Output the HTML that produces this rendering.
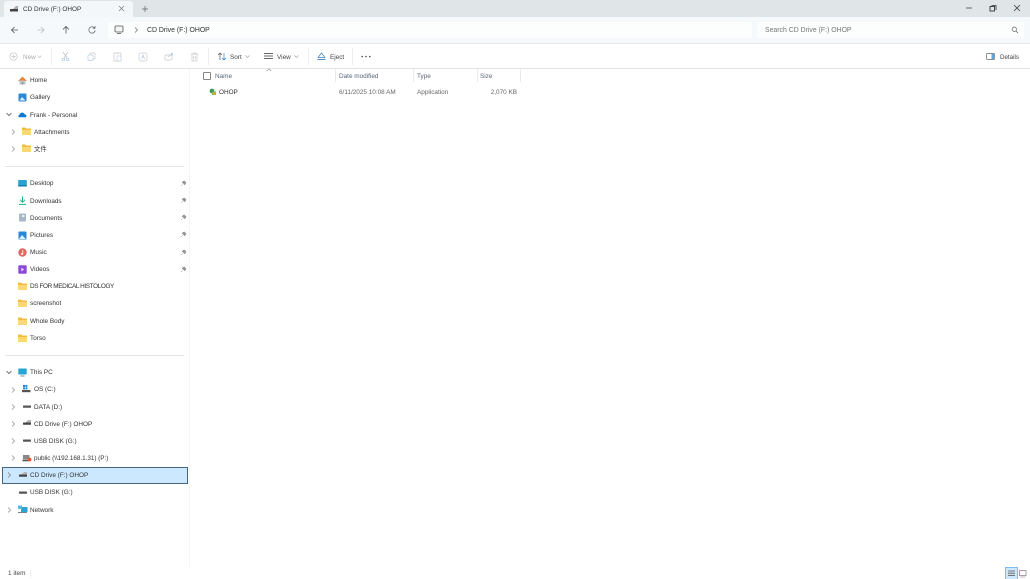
<!DOCTYPE html>
<html><head><meta charset="utf-8"><style>
html,body{margin:0;padding:0;width:1030px;height:579px;overflow:hidden;background:#fff}
body{position:relative;font-family:"Liberation Sans","Noto Sans CJK SC",sans-serif;font-size:6.4px;color:#333;filter:blur(.25px)}
.a{position:absolute}
.t{position:absolute;white-space:nowrap;line-height:10px;height:10px;margin-top:1px}
svg{position:absolute;overflow:visible}
.g{color:#666}
.h{color:#5a6478}
</style></head><body>
<div class="a" style="left:0;top:0;width:1030px;height:17px;background:#e0e5e8"></div>
<div class="a" style="left:4px;top:1px;width:129px;height:16px;background:#f3f7f9;border-radius:3px 3px 0 0"></div>
<div class="a" style="left:0;top:17px;width:1030px;height:26px;background:#f6f9fb;border-bottom:1px solid #e6e8ea"></div>
<div class="a" style="left:108px;top:22px;width:644px;height:16px;background:#fcfdfd;border-radius:2px"></div>
<div class="a" style="left:757px;top:22px;width:267px;height:16px;background:#fcfdfd;border-radius:2px"></div>
<div class="a" style="left:0;top:68px;width:1030px;height:1px;background:#e3e3e3"></div>
<div class="a" style="left:189px;top:69px;width:1px;height:498px;background:#f5f5f5"></div>

<!-- tab -->
<svg style="left:10px;top:5px" width="9" height="8"><rect x="0" y="4" width="8" height="2.5" fill="#444"/><path d="M3 4L6 1H8V4Z" fill="#aaa"/></svg>
<div class="t" style="left:23px;top:4px">CD Drive (F:) OHOP</div>
<svg style="left:118px;top:5px" width="8" height="8"><path d="M1 1L6 6M6 1L1 6" stroke="#777" stroke-width=".7"/></svg>
<svg style="left:141px;top:5px" width="8" height="8"><path d="M4 1V7M1 4H7" stroke="#666" stroke-width=".7"/></svg>
<!-- window -->
<svg style="left:965px;top:5px" width="8" height="6"><path d="M1 3H7" stroke="#444" stroke-width=".8"/></svg>
<svg style="left:989px;top:4px" width="8" height="8"><rect x="1" y="2.5" width="4.5" height="4.5" fill="none" stroke="#333" stroke-width=".9"/><path d="M2.5 1.5H7V6" fill="none" stroke="#333" stroke-width=".8"/></svg>
<svg style="left:1013px;top:4px" width="8" height="8"><path d="M1 1L7 7M7 1L1 7" stroke="#444" stroke-width=".8"/></svg>
<!-- nav -->
<svg style="left:10px;top:25px" width="10" height="10"><path d="M8 5H1.5M4.5 2L1.5 5L4.5 8" fill="none" stroke="#555" stroke-width=".8"/></svg>
<svg style="left:36px;top:25px" width="10" height="10"><path d="M1.5 5H8M5 2L8 5L5 8" fill="none" stroke="#bbb" stroke-width=".8"/></svg>
<svg style="left:61px;top:25px" width="10" height="10"><path d="M5 8.5V1.5M2 4.5L5 1.5L8 4.5" fill="none" stroke="#555" stroke-width=".8"/></svg>
<svg style="left:87px;top:25px" width="10" height="10"><path d="M7.6 3A3.2 3.2 0 1 0 8.2 5.5M8 1V3.2H5.8" fill="none" stroke="#666" stroke-width=".8"/></svg>
<svg style="left:114px;top:25px" width="11" height="10"><rect x="1" y="1" width="8" height="6" rx="1" fill="#f4f4f4" stroke="#555" stroke-width=".8"/><path d="M3 8.5H7" stroke="#555" stroke-width=".8"/></svg>
<svg style="left:134px;top:27px" width="5" height="6"><path d="M1 .5L3.5 3L1 5.5" fill="none" stroke="#666" stroke-width=".7"/></svg>
<div class="t" style="left:147px;top:25px;font-size:6.9px">CD Drive (F:) OHOP</div>
<div class="t g" style="left:765px;top:25px;font-size:6.9px;color:#777">Search CD Drive (F:) OHOP</div>
<svg style="left:1011px;top:26px" width="8" height="8"><circle cx="3.3" cy="3.3" r="2.2" fill="none" stroke="#666" stroke-width=".7"/><path d="M5 5L7 7" stroke="#666" stroke-width=".8"/></svg>

<!-- toolbar -->
<svg style="left:9px;top:52px" width="9" height="9"><circle cx="4.5" cy="4.5" r="3.7" fill="none" stroke="#c4c4c4" stroke-width=".7"/><path d="M4.5 2.5V6.5M2.5 4.5H6.5" stroke="#c4c4c4" stroke-width=".7"/></svg>
<div class="t" style="left:23px;top:52px;color:#aaa">New</div>
<svg style="left:37px;top:55px" width="5" height="4"><path d="M.5 .5L2.5 2.5L4.5 .5" fill="none" stroke="#bbb" stroke-width=".6"/></svg>
<div class="a" style="left:51px;top:48px;width:1px;height:17px;background:#eee"></div>
<svg style="left:61px;top:51px" width="9" height="11"><path d="M2 1L6 7M7 1L3 7" stroke="#c0c0c0" stroke-width=".7"/><circle cx="2.4" cy="8.5" r="1.3" fill="none" stroke="#a9c9e6" stroke-width=".7"/><circle cx="6.6" cy="8.5" r="1.3" fill="none" stroke="#a9c9e6" stroke-width=".7"/></svg>
<svg style="left:87px;top:52px" width="9" height="9"><rect x="3" y="1" width="5" height="6" rx="1" fill="none" stroke="#c8c8c8" stroke-width=".7"/><rect x="1" y="3" width="5" height="5.5" rx="1" fill="#fff" stroke="#b7d0e8" stroke-width=".7"/></svg>
<svg style="left:113px;top:51px" width="9" height="11"><rect x="1" y="2" width="7" height="8" rx="1" fill="none" stroke="#c8c8c8" stroke-width=".7"/><rect x="3" y="1" width="3" height="2" fill="#e4e4e4"/><rect x="4" y="5" width="4" height="5" fill="#fff" stroke="#b7d0e8" stroke-width=".6"/></svg>
<svg style="left:138px;top:51px" width="10" height="11"><rect x="1" y="2" width="8" height="8" rx="2" fill="none" stroke="#c8c8c8" stroke-width=".7"/><path d="M3.5 8L5 4L6.5 8" fill="none" stroke="#a9c9e6" stroke-width=".7"/></svg>
<svg style="left:164px;top:52px" width="10" height="9"><rect x="1" y="3" width="7" height="5" rx="1" fill="none" stroke="#c8c8c8" stroke-width=".7"/><path d="M4 5L8 2M6.5 1.5H8.5V3.5" fill="none" stroke="#a9c9e6" stroke-width=".7"/></svg>
<svg style="left:190px;top:52px" width="9" height="10"><path d="M1 2H8M2 2V9H7V2M3.5 2V1H5.5V2M3.7 4V7.5M5.3 4V7.5" fill="none" stroke="#c8c8c8" stroke-width=".7"/></svg>
<div class="a" style="left:208px;top:48px;width:1px;height:17px;background:#eee"></div>
<svg style="left:217px;top:52px" width="10" height="9"><path d="M3 8V1M1 3L3 1L5 3" fill="none" stroke="#555" stroke-width=".7"/><path d="M7 1V8M5 6L7 8L9 6" fill="none" stroke="#2f7fc9" stroke-width=".7"/></svg>
<div class="t" style="left:230px;top:52px;color:#444">Sort</div>
<svg style="left:245px;top:55px" width="5" height="4"><path d="M.5 .5L2.5 2.5L4.5 .5" fill="none" stroke="#999" stroke-width=".6"/></svg>
<svg style="left:264px;top:52px" width="10" height="8"><path d="M0 1.5H9M0 4H9M0 6.5H9" stroke="#666" stroke-width=".9"/></svg>
<div class="t" style="left:277px;top:52px;color:#444">View</div>
<svg style="left:294px;top:55px" width="5" height="4"><path d="M.5 .5L2.5 2.5L4.5 .5" fill="none" stroke="#999" stroke-width=".6"/></svg>
<div class="a" style="left:308px;top:48px;width:1px;height:17px;background:#eee"></div>
<svg style="left:317px;top:52px" width="9" height="9"><path d="M4.5 1L8 5.5H1Z" fill="none" stroke="#3d7fb8" stroke-width=".7"/><path d="M.5 7.5H8.5" stroke="#3d7fb8" stroke-width=".9"/></svg>
<div class="t" style="left:330px;top:52px;color:#444">Eject</div>
<div class="a" style="left:352px;top:48px;width:1px;height:17px;background:#eee"></div>
<svg style="left:361px;top:55px" width="10" height="3"><circle cx="1.2" cy="1.5" r=".8" fill="#444"/><circle cx="5" cy="1.5" r=".8" fill="#444"/><circle cx="8.8" cy="1.5" r=".8" fill="#444"/></svg>
<svg style="left:986px;top:53px" width="9" height="8"><rect x=".5" y=".5" width="8" height="6" rx="1" fill="none" stroke="#666" stroke-width=".7"/><rect x="5.5" y="1" width="2.5" height="5" fill="#5aa7e0"/></svg>
<div class="t" style="left:1000px;top:52px;color:#444;font-size:6.2px">Details</div>

<!-- column headers -->
<svg style="left:266px;top:68px" width="6" height="4"><path d="M.8 3L3 1L5.2 3" fill="none" stroke="#999" stroke-width=".7"/></svg>
<div class="a" style="left:203px;top:72px;width:6px;height:6px;border:1px solid #888;border-radius:1px"></div>
<div class="t h" style="left:215px;top:71px">Name</div>
<div class="t h" style="left:339px;top:71px">Date modified</div>
<div class="t h" style="left:417px;top:71px">Type</div>
<div class="t h" style="left:480px;top:71px">Size</div>
<div class="a" style="left:335px;top:69px;width:1px;height:13px;background:#eaeaea"></div>
<div class="a" style="left:413px;top:69px;width:1px;height:13px;background:#eaeaea"></div>
<div class="a" style="left:477px;top:69px;width:1px;height:13px;background:#eaeaea"></div>
<div class="a" style="left:520px;top:69px;width:1px;height:13px;background:#eaeaea"></div>
<!-- file row -->
<svg style="left:209px;top:88px" width="8" height="8"><circle cx="3" cy="3" r="2.4" fill="#3a9a5c"/><path d="M3 3.5H7V7H3Z" fill="#7bbf4a"/><circle cx="5.5" cy="5.5" r="1.4" fill="#d8a92c"/></svg>
<div class="t" style="left:219px;top:87px">OHOP</div>
<div class="t g" style="left:339px;top:87px">6/11/2025 10:08 AM</div>
<div class="t g" style="left:417px;top:87px">Application</div>
<div class="t g" style="left:480px;top:87px;width:37px;text-align:right">2,070 KB</div>

<!-- sidebar -->
<svg style="left:18px;top:76px" width="9" height="9"><path d="M4.5 .5L9 5H0Z" fill="#e8843c"/><rect x="1.5" y="4.5" width="6" height="4" fill="#b9c4cc"/><rect x="3.7" y="6" width="1.6" height="2.5" fill="#8d99a3"/></svg>
<div class="t" style="left:30px;top:75px">Home</div>
<svg style="left:18px;top:93px" width="9" height="9"><rect x=".5" y=".5" width="8" height="8" rx="1" fill="#2f86d4"/><path d="M1.5 7.5L4 4L7.5 7.5Z" fill="#d8ecfa"/></svg>
<div class="t" style="left:30px;top:92px">Gallery</div>
<svg style="left:6px;top:112px" width="6" height="5"><path d="M.5 1L3 3.5L5.5 1" fill="none" stroke="#555" stroke-width=".8"/></svg>
<svg style="left:18px;top:111px" width="9" height="7"><path d="M1.5 6.3C0 6.3 0 3.8 1.6 3.7C2.2 1 6 1 6.6 3.2C8.8 3.2 9 6.3 7.4 6.3Z" fill="#0f78d4"/></svg>
<div class="t" style="left:30px;top:110px">Frank - Personal</div>
<svg style="left:11px;top:129px" width="5" height="6"><path d="M1 .5L3.5 3L1 5.5" fill="none" stroke="#888" stroke-width=".7"/></svg>
<svg style="left:22px;top:127px" width="10" height="9"><use href="#f"/></svg>
<div class="t" style="left:34px;top:127px">Attachments</div>
<svg style="left:11px;top:146px" width="5" height="6"><path d="M1 .5L3.5 3L1 5.5" fill="none" stroke="#888" stroke-width=".7"/></svg>
<svg style="left:22px;top:144px" width="10" height="9"><use href="#f"/></svg>
<div class="t" style="left:34px;top:144px">文件</div>
<div class="a" style="left:5px;top:166px;width:179px;height:1px;background:#e4e4e4"></div>

<svg width="0" height="0" style="left:0;top:0"><defs><g id="f"><path d="M0 1.2Q0 .5 .7 .5H3.2L4.2 1.5H8.3Q9 1.5 9 2.2V7.3Q9 8 8.3 8H.7Q0 8 0 7.3Z" fill="#f2bc3f"/><path d="M0 3H9V7.3Q9 8 8.3 8H.7Q0 8 0 7.3Z" fill="#fcd873"/></g>
<g id="p"><path d="M2.5 5.5L1 7M3 2L5.5 4.5M2 3.2L4.8 6L5.5 4.5L6.2 3.8L4.2 1.8L3.5 2.5Z" fill="#9a9a9a" stroke="#8a8a8a" stroke-width=".5"/></g>
<g id="d"><rect x="0" y="2.5" width="8" height="2.3" rx=".4" fill="#555"/></g>
<g id="c"><rect x="0" y="3.5" width="8" height="2.3" rx=".4" fill="#444"/><path d="M2.5 3.5L5 1H8V3.5Z" fill="#b5b5b5"/></g></defs></svg>

<svg style="left:18px;top:179px" width="9" height="9"><rect x=".2" y="1" width="8.6" height="6.5" rx=".7" fill="#2aa3cf"/><path d="M.2 6H8.8V7.5H.2Z" fill="#1580ab"/></svg>
<div class="t" style="left:30px;top:178px">Desktop</div>
<svg style="left:18px;top:196px" width="9" height="10"><path d="M4.5 .5V6M2 3.8L4.5 6.3L7 3.8" fill="none" stroke="#1eb48a" stroke-width="1"/><path d="M1 8.4H8" stroke="#1eb48a" stroke-width="1"/></svg>
<div class="t" style="left:30px;top:196px">Downloads</div>
<svg style="left:18px;top:213px" width="9" height="9"><rect x="1" y=".5" width="7" height="8" rx=".7" fill="#a9b8c8"/><rect x="4" y="2" width="2.4" height="2" fill="#e6edf3"/></svg>
<div class="t" style="left:30px;top:213px">Documents</div>
<svg style="left:18px;top:231px" width="9" height="9"><rect x=".5" y=".5" width="8" height="8" rx=".8" fill="#2488dd"/><path d="M1 8L4 4L7.8 8Z" fill="#e1f0fb"/></svg>
<div class="t" style="left:30px;top:230px">Pictures</div>
<svg style="left:18px;top:248px" width="9" height="9"><circle cx="4.5" cy="4.5" r="4.2" fill="#e0695c"/><path d="M4.8 2V6" stroke="#fff" stroke-width=".8"/><circle cx="4" cy="6" r="1" fill="#fff"/></svg>
<div class="t" style="left:30px;top:247px">Music</div>
<svg style="left:18px;top:265px" width="9" height="9"><rect x=".3" y=".3" width="8.4" height="8.4" rx="1" fill="#8b4bd8"/><path d="M3.3 2.8L6.3 4.5L3.3 6.2Z" fill="#eadcf9"/></svg>
<div class="t" style="left:30px;top:264px">Videos</div>

<svg style="left:180px;top:179px" width="7" height="8"><use href="#p"/></svg>
<svg style="left:180px;top:196px" width="7" height="8"><use href="#p"/></svg>
<svg style="left:180px;top:213px" width="7" height="8"><use href="#p"/></svg>
<svg style="left:180px;top:230px" width="7" height="8"><use href="#p"/></svg>
<svg style="left:180px;top:248px" width="7" height="8"><use href="#p"/></svg>
<svg style="left:180px;top:265px" width="7" height="8"><use href="#p"/></svg>

<svg style="left:18px;top:282px" width="10" height="9"><use href="#f"/></svg>
<div class="t" style="left:30px;top:281px;letter-spacing:-.38px">DS FOR MEDICAL HISTOLOGY</div>
<svg style="left:18px;top:299px" width="10" height="9"><use href="#f"/></svg>
<div class="t" style="left:30px;top:298px">screenshot</div>
<svg style="left:18px;top:317px" width="10" height="9"><use href="#f"/></svg>
<div class="t" style="left:30px;top:316px">Whole Body</div>
<svg style="left:18px;top:334px" width="10" height="9"><use href="#f"/></svg>
<div class="t" style="left:30px;top:333px">Torso</div>
<div class="a" style="left:5px;top:355px;width:179px;height:1px;background:#e4e4e4"></div>

<svg style="left:6px;top:370px" width="6" height="5"><path d="M.5 1L3 3.5L5.5 1" fill="none" stroke="#555" stroke-width=".8"/></svg>
<svg style="left:18px;top:368px" width="10" height="9"><rect x=".3" y=".5" width="8.4" height="6" rx=".6" fill="#27a6d6"/><path d="M2.5 8H6.5" stroke="#778" stroke-width=".9"/></svg>
<div class="t" style="left:30px;top:367px">This PC</div>

<svg style="left:11px;top:387px" width="5" height="6"><path d="M1 .5L3.5 3L1 5.5" fill="none" stroke="#888" stroke-width=".7"/></svg>
<svg style="left:22px;top:385px" width="10" height="9"><rect x="1" y="0" width="2" height="2" fill="#1f87d6"/><rect x="3.4" y="0" width="2" height="2" fill="#1f87d6"/><rect x="1" y="2.4" width="2" height="2" fill="#1f87d6"/><rect x="3.4" y="2.4" width="2" height="2" fill="#1f87d6"/><rect x="0" y="5" width="8.5" height="2.2" fill="#555"/></svg>
<div class="t" style="left:34px;top:384px">OS (C:)</div>
<svg style="left:11px;top:404px" width="5" height="6"><path d="M1 .5L3.5 3L1 5.5" fill="none" stroke="#888" stroke-width=".7"/></svg>
<svg style="left:23px;top:403px" width="9" height="8"><use href="#d"/></svg>
<div class="t" style="left:34px;top:402px">DATA (D:)</div>
<svg style="left:11px;top:421px" width="5" height="6"><path d="M1 .5L3.5 3L1 5.5" fill="none" stroke="#888" stroke-width=".7"/></svg>
<svg style="left:23px;top:419px" width="9" height="8"><use href="#c"/></svg>
<div class="t" style="left:34px;top:419px">CD Drive (F:) OHOP</div>
<svg style="left:11px;top:438px" width="5" height="6"><path d="M1 .5L3.5 3L1 5.5" fill="none" stroke="#888" stroke-width=".7"/></svg>
<svg style="left:23px;top:437px" width="9" height="8"><use href="#d"/></svg>
<div class="t" style="left:34px;top:436px">USB DISK (G:)</div>
<svg style="left:11px;top:455px" width="5" height="6"><path d="M1 .5L3.5 3L1 5.5" fill="none" stroke="#888" stroke-width=".7"/></svg>
<svg style="left:22px;top:453px" width="10" height="10"><rect x="1" y="2" width="6.5" height="4" fill="#888"/><rect x=".5" y="6.5" width="7.5" height="1.8" fill="#555"/><circle cx="7.5" cy="6.5" r="1.9" fill="#e8552d"/></svg>
<div class="t" style="left:34px;top:453px;letter-spacing:-.05px">public (\\192.168.1.31) (P:)</div>

<div class="a" style="left:2px;top:467px;width:184px;height:15px;background:#cce8ff;border:1px solid #48657e"></div>
<svg style="left:7px;top:472px" width="5" height="6"><path d="M1 .5L3.5 3L1 5.5" fill="none" stroke="#777" stroke-width=".7"/></svg>
<svg style="left:19px;top:471px" width="9" height="8"><use href="#c"/></svg>
<div class="t" style="left:30px;top:470px">CD Drive (F:) OHOP</div>
<svg style="left:19px;top:489px" width="9" height="8"><use href="#d"/></svg>
<div class="t" style="left:30px;top:487px">USB DISK (G:)</div>
<svg style="left:7px;top:507px" width="5" height="6"><path d="M1 .5L3.5 3L1 5.5" fill="none" stroke="#888" stroke-width=".7"/></svg>
<svg style="left:18px;top:505px" width="10" height="9"><rect x="3" y="2" width="6.5" height="5" fill="#2aa3d6"/><rect x="0" y=".5" width="4" height="3.5" fill="#5bb9e3"/><path d="M0 7.5H9" stroke="#678" stroke-width=".9"/></svg>
<div class="t" style="left:30px;top:505px">Network</div>

<!-- status -->
<div class="t" style="left:8px;top:568px;color:#444">1 item</div>
<div class="a" style="left:30px;top:570px;width:1px;height:7px;background:#eee"></div>
<div class="a" style="left:1005px;top:567px;width:11px;height:12px;background:#cce8ff;border-left:1px solid #7fbde8;border-right:1px solid #7fbde8;border-top:1px solid #7fbde8"></div>
<svg style="left:1008px;top:570px" width="8" height="7"><path d="M0 1H7M0 3.2H7M0 5.4H7" stroke="#777" stroke-width="1.1"/></svg>
<svg style="left:1019px;top:570px" width="9" height="8"><rect x=".5" y=".5" width="6.5" height="5" fill="#fff" stroke="#999" stroke-width=".9"/><path d="M1 7H6.5" stroke="#aaa" stroke-width=".8"/></svg>
</body></html>
